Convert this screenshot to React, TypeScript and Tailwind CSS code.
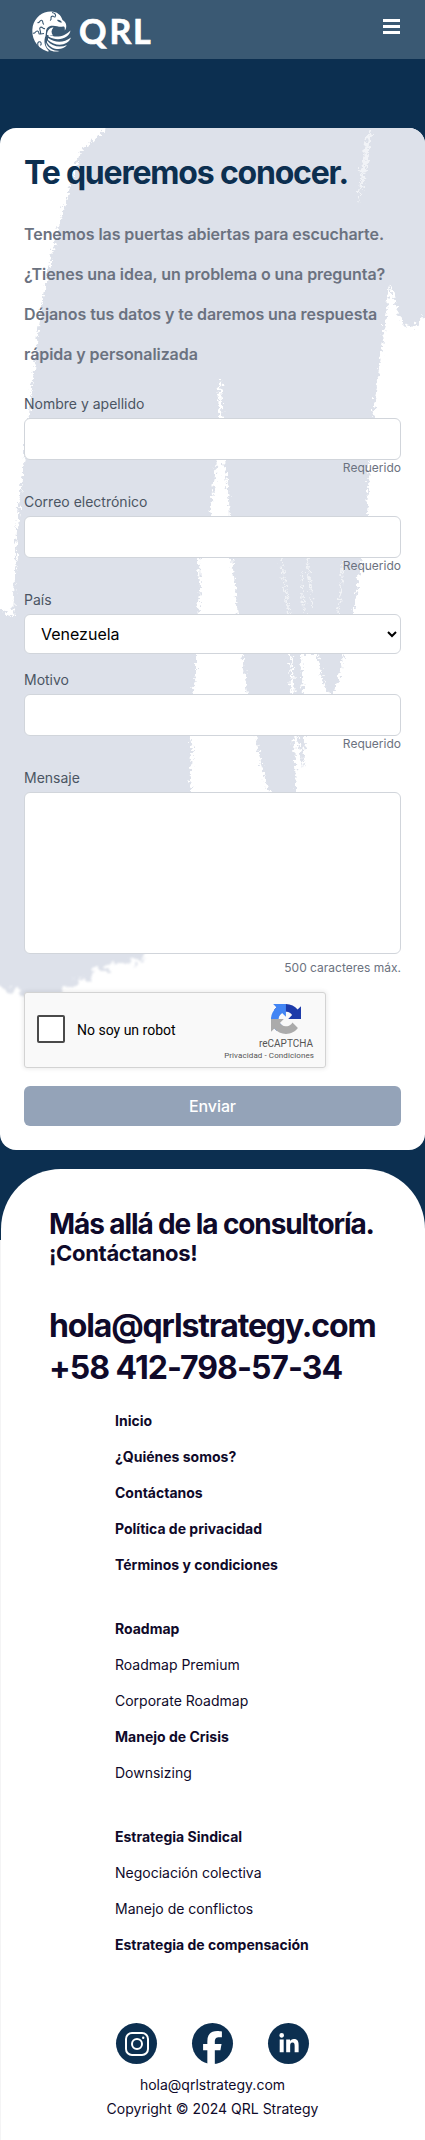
import type { ReactNode } from "react";
import { FaFacebookF, FaLinkedinIn } from "react-icons/fa6";

function EagleMark() {
  return (
    <svg viewBox="0 0 48 48" className="h-12 w-12" fill="none">
      <path
        d="M23 3.500C14 3.500 7 9.500 4.800 18C2.500 29 8 40 19.500 43.500C21 43.800 21 43 20 42C16.500 38 15.500 33 17.500 28L18 24C18 20 21 17.500 25 17.800C29 18 32 19.500 35 18.500C36.500 18 37 19 36.800 22.500C39.500 19 38.500 14 34.500 12C33 7 29 3.500 23 3.500Z"
        fill="#fff"
      />
      <path d="M19 27C19 22 22 19.500 25.500 19.500C23 22 23 25 25 27.500Z" fill="#fff" />
      <path d="M20.500 26.500C28 30.500 37 28.500 42.500 22.500C41.500 30 30 34.500 20.500 28.500Z" fill="#fff" />
      <path d="M20 30C27 35 36 35 43 29.500C40.500 37.500 28 39.500 20 32Z" fill="#fff" />
      <path d="M19 32.500C24 38.500 32 40 39 37C34.500 43 23.500 42.500 19 34.500Z" fill="#fff" />
      <path d="M17.800 34.500C20 40 25 43 31.500 43C25.500 45 18.500 42 17.800 36Z" fill="#fff" />
      <path
        d="M9.500 14.500C12.500 15.500 11 12 13.500 12.200C16 12.500 13.500 15.500 16 16.500M5 25C7.500 26.500 7 22.500 9.500 23C12 23.500 9.500 26.500 12.500 26L16 25.500M12.500 26C13.500 22.500 10 20.500 12.500 19.200C15 18.500 14.500 21.500 17 20.500M10 40C10.500 37 8.500 36 10.500 34C13 33 14 35.500 12.500 37.500M24 4.500C27 5 28.500 7 27 9C25 9.500 26 7 23.500 8.500C22 10 24.500 11 22 12.500"
        stroke="#3a5973"
        strokeWidth="1.100"
      />
      <path d="M29 12C31 11.500 33 12.500 34 14.500C32 14.500 30 14 29 12Z" fill="#3a5973" />
    </svg>
  );
}

function BrushStroke() {
  return (
    <svg viewBox="0 128 425 1022" className="absolute inset-0 h-full w-full" aria-hidden="true">
      <defs>
        <filter id="rough" x="-5%" y="-5%" width="110%" height="110%" colorInterpolationFilters="sRGB">
          <feTurbulence type="fractalNoise" baseFrequency="0.3" numOctaves="3" seed="4" />
          <feDisplacementMap in="SourceGraphic" scale="11" xChannelSelector="R" yChannelSelector="G" />
          <feGaussianBlur stdDeviation="0.6" />
        </filter>
        <filter id="wash" x="-20%" y="-20%" width="140%" height="140%" colorInterpolationFilters="sRGB">
          <feTurbulence type="fractalNoise" baseFrequency="0.07" numOctaves="4" seed="9" />
          <feDisplacementMap in="SourceGraphic" scale="24" xChannelSelector="R" yChannelSelector="G" />
          <feGaussianBlur stdDeviation="1.2" />
        </filter>
      </defs>
      <path
        fill="#dde1ea"
        filter="url(#wash)"
        d="M-30 930L-30 984L4 986L18 990L24 1000L50 994L72 988L80 974L92 978L88 970L108 970L126 962L154 954L170 930Z"
      />
      <g filter="url(#rough)">
        <path
          fill="#dde1ea"
          d="M107 110L107 128L80 152L74 170L68 195L59 225L52 255L44 290L38 335L34 370L30 405L25 455L20 495L17 530L15 575L13 618L0 610L-15 606L-15 965L60 965L120 950L180 935L190 792L192 750L188 715L196 675L196 630L200 590L199 560L210 518L213 490L217 460L219 378L221 378L224 460L229 500L232 558L238 615L242 654L247 694L256 736L262 770L272 800L296 800L295 760L291 700L290 654L292 654L298 740L303 768L305 740L301 654L318 654L323 684L332 697L341 670L343 654L353 614L362 558L367 516L369 460L375 400L383 340L390 284L396 305L403 325L412 328L425 316L440 308L440 110Z"
        />
        <path fill="#fff" d="M368 132L372 132L365 175L358 205L361 170Z" opacity=".6" />
        <path d="M281 558L289 614M302 570L304 614M344 560L338 614M307 558L312 605" stroke="#fff" strokeWidth="1.600" opacity=".6" />
      </g>
    </svg>
  );
}

function Field({ label, hint, children }: { label: string; hint?: string; children: ReactNode }) {
  return (
    <div>
      <label className="mb-1 block text-sm leading-5 text-[#4b5563]">{label}</label>
      {children}
      {hint && <p className="text-right text-xs leading-4 text-[#6b7280]">{hint}</p>}
    </div>
  );
}

const inputClass = "block h-[42px] w-full rounded-md border border-[#d1d5db] bg-white px-4 outline-none";

function RecaptchaLogo() {
  return (
    <svg viewBox="0 0 64 64" className="h-[30px] w-[30px]">
      <path d="M64 31.955l-.033-1.370V4.687l-7.160 7.160C50.948 4.674 42.033.093 32.050.093c-10.400 0-19.622 4.960-25.458 12.640l11.736 11.860a15.550 15.550 0 0 1 4.754-5.334c2.050-1.600 4.952-2.906 8.968-2.906.485 0 .860.057 1.135.163 4.976.393 9.288 3.140 11.828 7.124l-8.307 8.307L64 31.953" fill="#1c3aa9" />
      <path d="M31.862.094l-1.370.033H4.594l7.160 7.160C4.580 13.147 0 22.060 0 32.046c0 10.400 4.960 19.622 12.640 25.458L24.500 45.768a15.550 15.550 0 0 1-5.334-4.754c-1.600-2.050-2.906-4.952-2.906-8.968 0-.485.057-.860.163-1.135.393-4.976 3.140-9.288 7.124-11.828l8.307 8.307L31.860.095" fill="#4285f4" />
      <path d="M.001 32.045l.033 1.370v25.898l7.160-7.160c5.860 7.173 14.774 11.754 24.760 11.754 10.400 0 19.622-4.960 25.458-12.640l-11.736-11.860a15.550 15.550 0 0 1-4.754 5.334c-2.050 1.600-4.952 2.906-8.968 2.906-.485 0-.860-.057-1.135-.163-4.976-.393-9.288-3.140-11.828-7.124l8.307-8.307c-10.522.040-22.400.066-27.295-.005" fill="#ababab" />
    </svg>
  );
}

const groups = [
  [
    { text: "Inicio", bold: true },
    { text: "¿Quiénes somos?", bold: true },
    { text: "Contáctanos", bold: true },
    { text: "Política de privacidad", bold: true },
    { text: "Términos y condiciones", bold: true },
  ],
  [
    { text: "Roadmap", bold: true },
    { text: "Roadmap Premium", bold: false },
    { text: "Corporate Roadmap", bold: false },
    { text: "Manejo de Crisis", bold: true },
    { text: "Downsizing", bold: false },
  ],
  [
    { text: "Estrategia Sindical", bold: true },
    { text: "Negociación colectiva", bold: false },
    { text: "Manejo de conflictos", bold: false },
    { text: "Estrategia de compensación", bold: true },
  ],
];

export default function App() {
  return (
    <div className="h-[2140px] w-full overflow-hidden bg-[linear-gradient(#0c2f50_0_1240px,#f4f4f5_1240px)] font-['Inter',sans-serif]">
      <header className="flex h-[59px] items-start justify-between bg-[#3a5973] pr-[25px] pl-7">
        <div className="flex pt-2">
          <EagleMark />
          <svg viewBox="0 0 76 48" className="mt-[3px] ml-[3px] h-[48px] w-[76px] overflow-visible">
            <text x="0 30.5 54" y="33" fill="#fff" stroke="#fff" strokeWidth=".7" className="font-['Lato',sans-serif] text-[34px] font-bold">
              QRL
            </text>
          </svg>
        </div>
        <svg viewBox="0 0 17 15" className="mt-[19px] h-[15px] w-[17px]" fill="#fff">
          <path d="M0 0h17v3H0zM0 6h17v3H0zM0 12h17v3H0z" />
        </svg>
      </header>

      <main className="relative mt-[69px] h-[1022px] overflow-hidden rounded-2xl bg-white">
        <BrushStroke />
        <div className="relative px-6 pt-[25px]">
          <h1 className="text-[32px] leading-10 font-bold tracking-[-1.2px] text-[#0c2f50]">Te queremos conocer.</h1>
          <p className="mt-[21px] text-base leading-10 font-semibold tracking-[-0.07px] text-[#6b7280]">
            Tenemos las puertas abiertas para escucharte. ¿Tienes una idea, un problema o una pregunta? Déjanos tus datos
            y te daremos una respuesta rápida y personalizada
          </p>
          <form className="mt-5 flex flex-col gap-4">
            <Field label="Nombre y apellido" hint="Requerido">
              <input className={inputClass} />
            </Field>
            <Field label="Correo electrónico" hint="Requerido">
              <input className={inputClass} />
            </Field>
            <Field label="País">
              <select className="block h-10 w-full rounded-md border border-[#d1d5db] bg-white px-3 text-base text-black">
                <option>Venezuela</option>
              </select>
            </Field>
            <Field label="Motivo" hint="Requerido">
              <input className={inputClass} />
            </Field>
            <Field label="Mensaje">
              <textarea className="block h-[162px] w-full resize-none rounded-md border border-[#d1d5db] bg-white" />
              <p className="mt-1.5 text-right text-xs leading-4 text-[#6b7280]">500 caracteres máx.</p>
            </Field>
            <div className="h-[78px]">
              <div className="flex h-[76px] w-[302px] items-center rounded-[3px] border border-[#d3d3d3] bg-[#f9f9f9] pl-3 font-['Roboto',sans-serif] shadow-[0_0_4px_1px_rgba(0,0,0,0.08)]">
                <span className="mb-0.5 h-7 w-7 rounded-[2px] border-2 border-[#4a4a4a] bg-white" />
                <span className="ml-3 text-sm text-black">No soy un robot</span>
                <div className="ml-auto flex flex-col items-end pt-1.5 pr-[11px] text-[#555]">
                  <div className="mr-[13px] mb-1">
                    <RecaptchaLogo />
                  </div>
                  <span className="mr-px text-[10px] leading-3">reCAPTCHA</span>
                  <span className="text-[8px] leading-3 tracking-[0.09px]">Privacidad - Condiciones</span>
                </div>
              </div>
            </div>
            <button type="button" className="h-10 w-full rounded-md bg-[#94a3b8] text-base font-medium tracking-[-0.1px] text-white">
              Enviar
            </button>
          </form>
        </div>
      </main>

      <footer className="mt-[19px] ml-px h-[971px] rounded-t-[60px] bg-white pt-9 text-[#0f0a2a]">
        <div className="pl-12 font-bold">
          <h2 className="text-[28px] leading-[38px] tracking-[-1.1px]">Más allá de la consultoría.</h2>
          <p className="text-[22px] leading-5 tracking-[-0.33px]">¡Contáctanos!</p>
          <p className="mt-[42px] text-[32px] leading-[42px] tracking-[-1.15px]">hola@qrlstrategy.com</p>
          <p className="text-[32px] leading-[42px] tracking-[-1px]">+58 412-798-57-34</p>
        </div>
        <nav className="mt-[22px] flex flex-col gap-11 pl-[114px] text-sm leading-5">
          {groups.map((links, i) => (
            <ul key={i} className="flex flex-col gap-4">
              {links.map(({ text, bold }) => (
                <li key={text} className={bold ? "font-bold" : "font-normal"}>
                  {text}
                </li>
              ))}
            </ul>
          ))}
        </nav>
        <div className="mt-[68px] mr-px flex justify-center gap-[35px]">
          <span className="flex h-[41px] w-[41px] items-center justify-center rounded-full bg-[#0c2f50]">
            <svg viewBox="0 0 24 24" className="h-6 w-6" fill="none" stroke="#fff" strokeWidth="2">
              <rect x="1" y="1" width="22" height="22" rx="6" />
              <circle cx="12" cy="12" r="5" />
              <circle cx="18.200" cy="5.800" r="1.200" fill="#fff" stroke="none" />
            </svg>
          </span>
          <span className="flex h-[41px] w-[41px] items-end justify-center rounded-full bg-[#0c2f50]">
            <FaFacebookF className="h-[33px] w-[21px] text-white" />
          </span>
          <span className="flex h-[41px] w-[41px] items-center justify-center rounded-full bg-[#0c2f50]">
            <FaLinkedinIn className="h-[22px] w-[22px] text-white" />
          </span>
        </div>
        <div className="mt-[9px] mr-px text-center text-sm leading-6">
          <p>hola@qrlstrategy.com</p>
          <p>Copyright © 2024 QRL Strategy</p>
        </div>
      </footer>
    </div>
  );
}
